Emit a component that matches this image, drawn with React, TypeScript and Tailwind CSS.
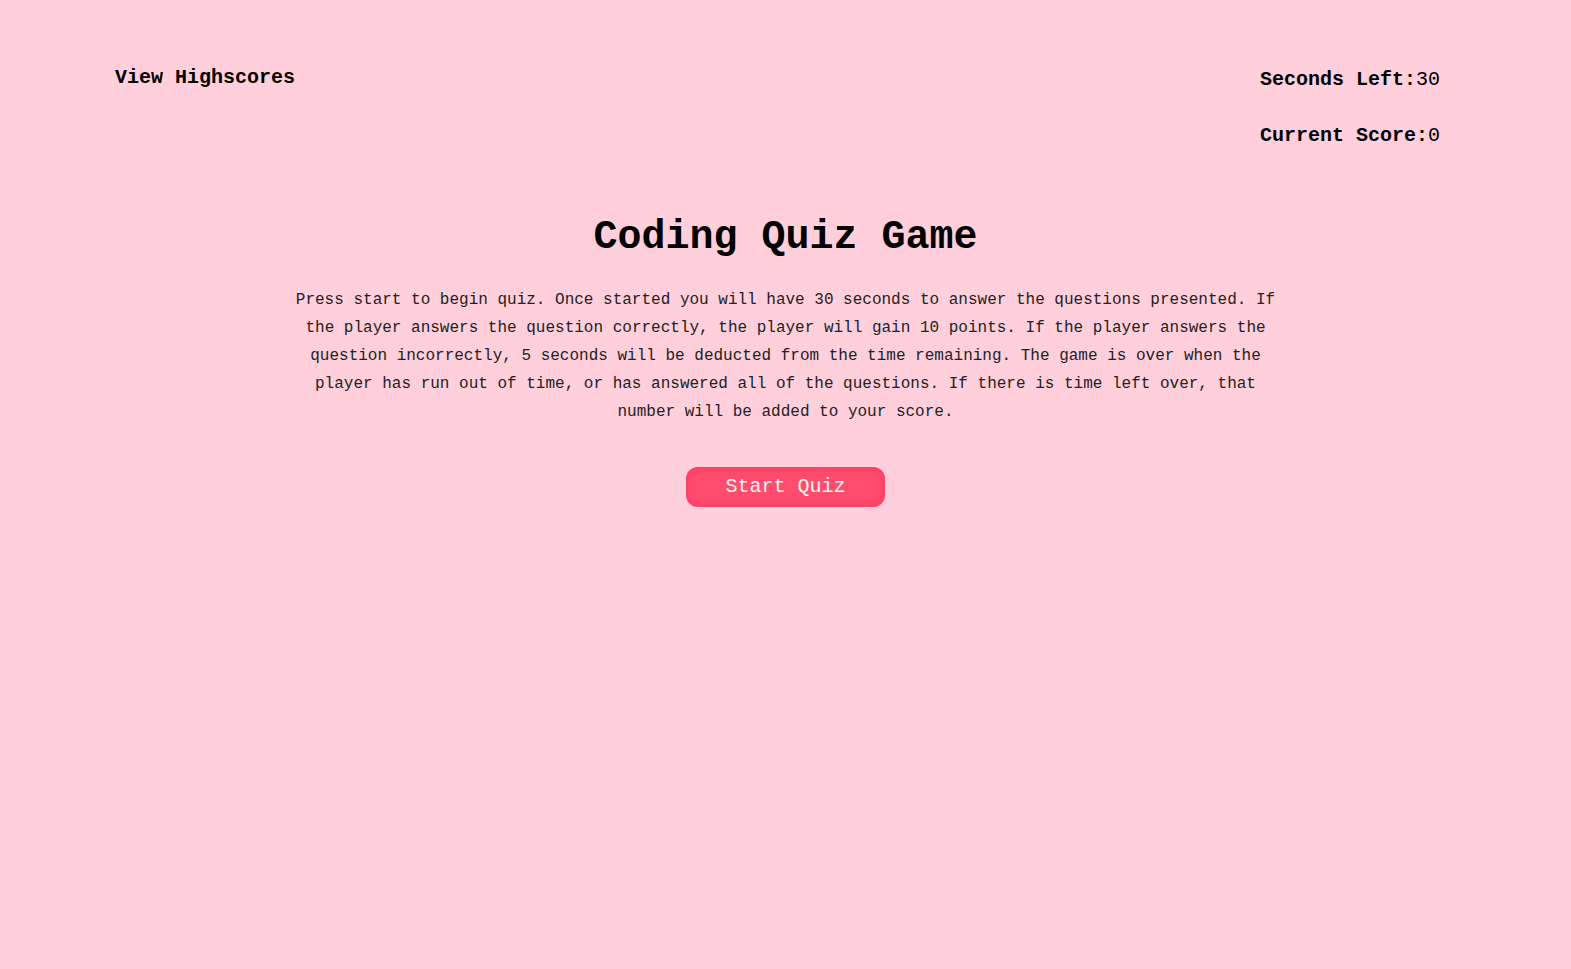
const App = () => {
  return (
    <div className="min-h-screen bg-[#ffcfdc] text-black font-['Liberation_Mono','Courier_New',monospace]">
      {/* Header */}
      <header className="flex justify-between items-start pl-[115px] pr-[131px] pt-[66px]">
        <a className="text-[20px] leading-[24px] font-bold cursor-pointer">View Highscores</a>
        <div className="flex flex-col gap-[32px] mt-[2px] text-[20px] leading-[24px] font-bold">
          <div>Seconds Left:<span className="font-normal">30</span></div>
          <div>Current Score:<span className="font-normal">0</span></div>
        </div>
      </header>

      {/* Intro */}
      <main className="flex flex-col items-center mt-[66px]">
        <h1 className="text-[40px] leading-[48px] font-bold">Coding Quiz Game</h1>
        <p className="mt-[24px] max-w-[1000px] text-center text-[16px] leading-[28px] text-[#222]">
          Press start to begin quiz. Once started you will have 30 seconds to answer the questions presented. If the player answers the question correctly, the player will gain 10 points. If the player answers the question incorrectly, 5 seconds will be deducted from the time remaining. The game is over when the player has run out of time, or has answered all of the questions. If there is time left over, that number will be added to your score.
        </p>
        <button className="mt-[41px] w-[199px] h-[40px] rounded-[12px] bg-[#ff4d6e] text-[20px] text-[#fff0f3] shadow-[inset_0_0_12px_rgba(255,40,90,0.6)] font-['Liberation_Mono','Courier_New',monospace]">
          Start Quiz
        </button>
      </main>
    </div>
  );
};

export default App;
